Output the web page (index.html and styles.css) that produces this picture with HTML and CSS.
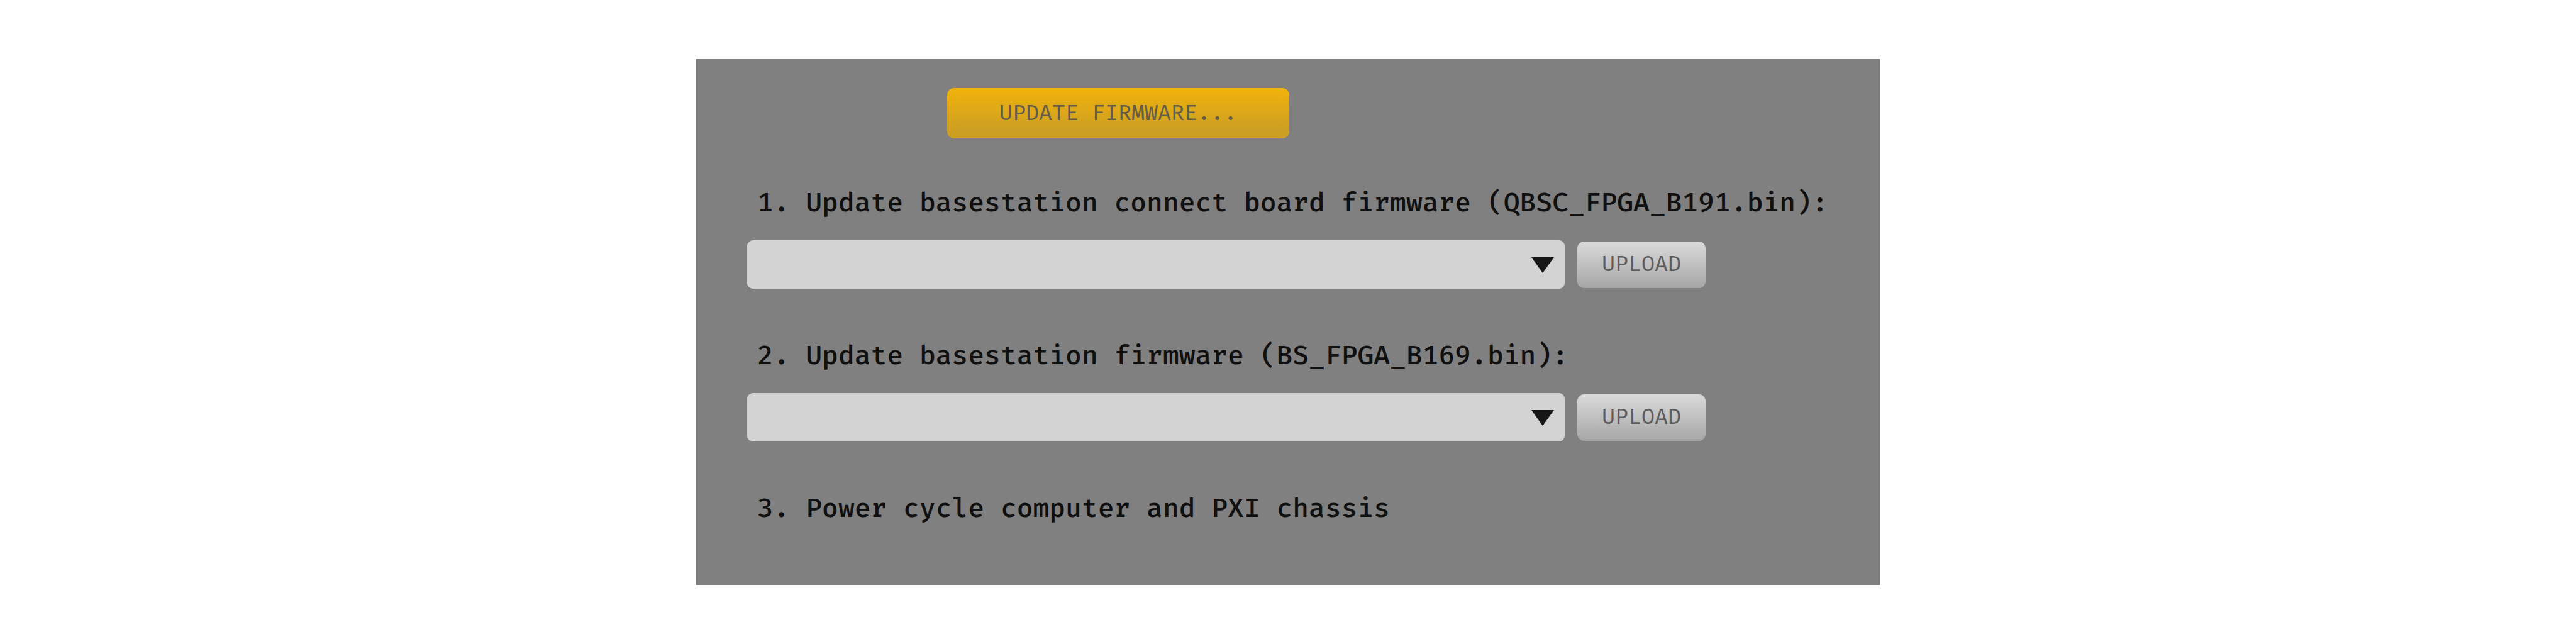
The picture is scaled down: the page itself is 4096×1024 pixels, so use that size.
FILE: index.html
```html
<!DOCTYPE html>
<html lang="en">
<head>
<meta charset="utf-8">
<title>Update firmware</title>
<link rel="stylesheet" href="styles.css">
</head>
<body>
<main class="panel">
  <div class="toolbar">
    <button class="button button-primary" type="button">UPDATE FIRMWARE...</button>
  </div>
  <section class="step">
    <label class="step-title" for="connect-board">1. Update basestation connect board firmware (QBSC_FPGA_B191.bin):</label>
    <div class="step-row">
      <div class="picker">
        <select class="picker-select" id="connect-board"><option></option></select>
        <svg class="picker-arrow" viewBox="0 0 36 25" aria-hidden="true"><path d="M0 0H36L18 25Z"/></svg>
      </div>
      <button class="button" type="button">UPLOAD</button>
    </div>
  </section>
  <section class="step">
    <label class="step-title" for="basestation">2. Update basestation firmware (BS_FPGA_B169.bin):</label>
    <div class="step-row">
      <div class="picker">
        <select class="picker-select" id="basestation"><option></option></select>
        <svg class="picker-arrow" viewBox="0 0 36 25" aria-hidden="true"><path d="M0 0H36L18 25Z"/></svg>
      </div>
      <button class="button" type="button">UPLOAD</button>
    </div>
  </section>
  <section class="step">
    <p class="step-title">3. Power cycle computer and PXI chassis</p>
  </section>
</main>
</body>
</html>
```
FILE: styles.css
```css
* {
  box-sizing: border-box;
}

body {
  margin: 0;
  padding: 94px 27%;
  background: #fff;
  font-family: "Fira Mono", "DejaVu Sans Mono", "Liberation Mono", monospace;
}

.panel {
  display: flex;
  flex-direction: column;
  gap: 76px;
  padding: 46px 0 92px 82px;
  background: #808080;
}

.toolbar {
  display: flex;
  height: 76px;
  padding-left: 318px;
}

.step {
  display: flex;
  flex-direction: column;
  gap: 30px;
}

.step-title {
  margin: 0;
  padding-left: 16px;
  color: #101010;
  font-size: 43px;
  font-weight: 500;
  line-height: 60px;
  white-space: nowrap;
}

.step-row {
  display: flex;
  align-items: center;
  gap: 20px;
  padding-right: 278px;
}

.picker {
  position: relative;
  flex: 1;
  height: 77px;
}

.picker-select {
  display: block;
  width: 100%;
  height: 100%;
  padding: 0 60px 0 16px;
  border: 0;
  border-radius: 9px;
  appearance: none;
  background: #d3d3d3;
  color: #101010;
  font: inherit;
  font-size: 35px;
}

.picker-arrow {
  position: absolute;
  top: 27px;
  right: 17px;
  width: 36px;
  height: 25px;
  fill: #161616;
  pointer-events: none;
}

.button {
  flex: none;
  height: 74px;
  padding: 0 39px 4px;
  border: 0;
  border-radius: 11px;
  background: linear-gradient(#dadada, #a6a6a6);
  color: #5c5c5c;
  font-family: inherit;
  font-size: 35px;
  line-height: 60px;
}

.button-primary {
  height: 80px;
  padding: 0 83px 2px;
  background: linear-gradient(#efb20d 5%, #cc9e22 85%);
  color: #625c49;
}
```
